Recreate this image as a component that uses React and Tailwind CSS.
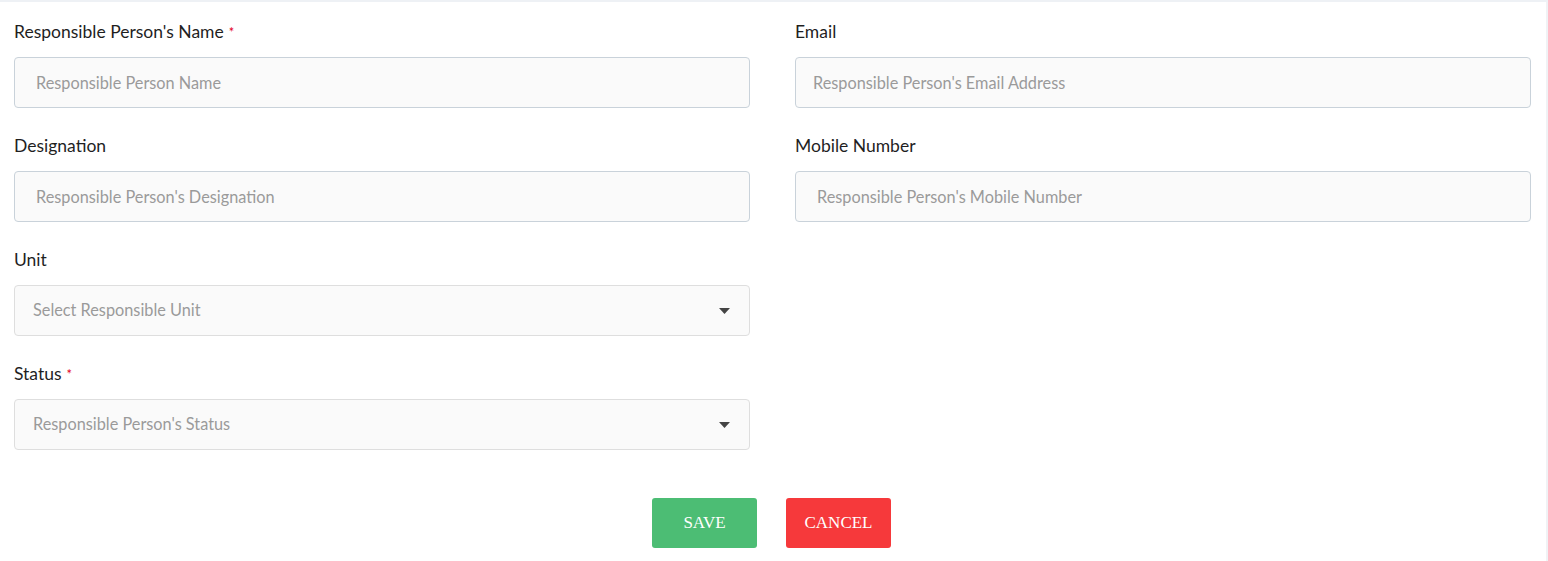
import React from 'react';

function Label({ text, required }) {
    return (
        <label className="block h-6 mb-[13px] text-[17.5px] leading-6 text-[#1f1f1f]">
            {text}
            {required && <span className="ml-[5px] text-[13px] align-top text-[#e3001b]">*</span>}
        </label>
    );
}

function TextField({ label, placeholder, required, pad = 'pl-[21px]' }) {
    return (
        <div>
            <Label text={label} required={required} />
            <input
                type="text"
                placeholder={placeholder}
                className={`block w-full h-[51px] ${pad} pr-3 rounded-[4px] border border-[#c9d2da] bg-[#fafafa] text-[16.3px] text-[#333] placeholder:text-[#9a9a9a] outline-none`}
            />
        </div>
    );
}

function SelectField({ label, placeholder, required }) {
    return (
        <div>
            <Label text={label} required={required} />
            <div className="flex items-center justify-between h-[51px] pl-[18px] pr-[19px] rounded-[4px] border border-[#dedede] bg-[#fafafa]">
                <span className="text-[16.3px] text-[#9a9a9a]">{placeholder}</span>
                <svg width="11" height="6" viewBox="0 0 11 6">
                    <path d="M0 0h11L5.5 6z" fill="#444" />
                </svg>
            </div>
        </div>
    );
}

export default function App() {
    return (
        <div className="w-[1548px] h-[561px] bg-white border-t-2 border-t-[#eef1f5] border-r-2 border-r-[#f0f2f5] font-['Lato',sans-serif]">
            <div className="pt-[18px] pl-[14px] pr-[15px]">
                <div className="grid grid-cols-2 gap-x-[45px] gap-y-[26px]">
                    <TextField label="Responsible Person's Name" placeholder="Responsible Person Name" required />
                    <TextField label="Email" placeholder="Responsible Person's Email Address" pad="pl-[17px]" />
                    <TextField label="Designation" placeholder="Responsible Person's Designation" />
                    <TextField label="Mobile Number" placeholder="Responsible Person's Mobile Number" />
                    <SelectField label="Unit" placeholder="Select Responsible Unit" />
                    <div />
                    <SelectField label="Status" placeholder="Responsible Person's Status" required />
                    <div />
                </div>
                <div className="flex justify-center gap-[29px] mt-[48px] pr-[2px]">
                    <button className="w-[105px] h-[50px] rounded-[3px] bg-[#4cbd74] text-white text-[17px] font-['Liberation_Serif',serif]">
                        SAVE
                    </button>
                    <button className="w-[105px] h-[50px] rounded-[3px] bg-[#f6393b] text-white text-[17px] font-['Liberation_Serif',serif]">
                        CANCEL
                    </button>
                </div>
            </div>
        </div>
    );
}
